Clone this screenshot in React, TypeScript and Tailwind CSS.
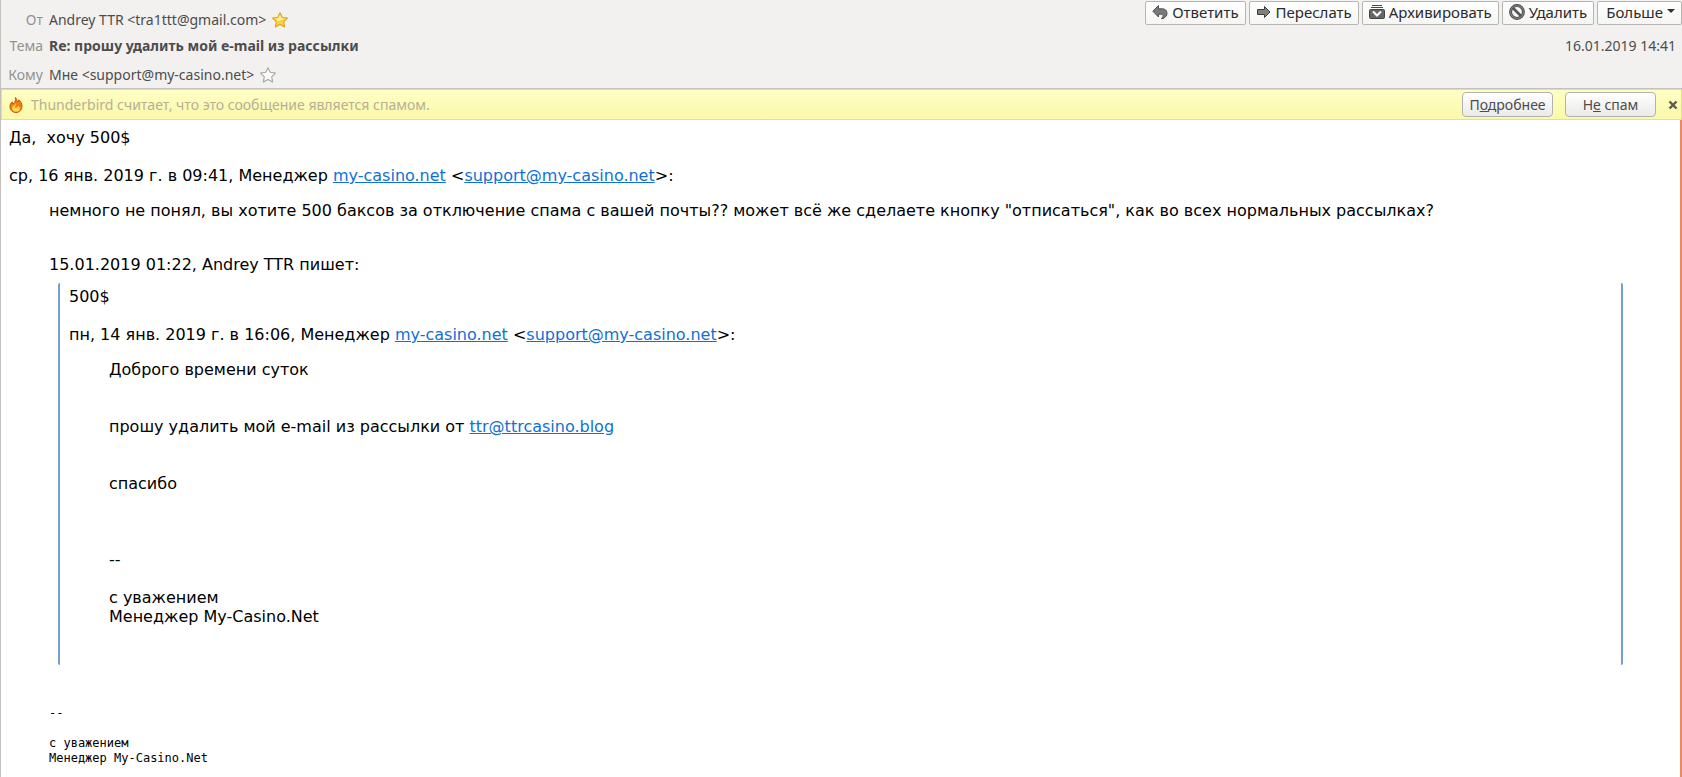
import { type ReactNode } from "react";

const MAIL = "support@my-casino.net";

function ReplyIcon() {
  return (
    <svg width="16" height="16" viewBox="0 0 16 16" aria-hidden="true">
      <path d="M6.500 1.500v3.300h3.500c3.300 0 5 1.700 5 4.600 0 2.100-1.400 3.800-3.600 5.100H9.500c1.100-1.100 1.600-2 1.600-2.900 0-1-.7-1.400-1.900-1.400H6.500v2.800L.8 7.200z" fill="#7a7a7a" stroke="#505050" strokeLinejoin="round" />
    </svg>
  );
}

function ForwardIcon() {
  return (
    <svg width="16" height="16" viewBox="0 0 16 16" aria-hidden="true">
      <path d="M1.500 5.500h7v-3L14 8l-5.500 5.500v-3h-7z" fill="#808080" stroke="#3c3c3c" strokeLinejoin="round" />
    </svg>
  );
}

function ArchiveIcon() {
  return (
    <svg width="16" height="16" viewBox="0 0 16 16" aria-hidden="true">
      <path d="M3 1.500h10M2 3.500h12" stroke="#4c4c4c" />
      <rect x="0.500" y="5.500" width="15" height="9" rx="1" fill="#666" stroke="#444" />
      <path d="M4 7.500l4 4 4-4" fill="none" stroke="#fff" strokeWidth="2" />
    </svg>
  );
}

function DeleteIcon() {
  return (
    <svg width="16" height="16" viewBox="0 0 16 16" aria-hidden="true">
      <circle cx="8" cy="8" r="6.400" fill="none" stroke="#4a4a4a" strokeWidth="3" />
      <circle cx="8" cy="8" r="6.400" fill="none" stroke="#808080" strokeWidth="1.200" />
      <path d="M4 4l8 8" stroke="#555" strokeWidth="2.600" />
    </svg>
  );
}

function Star({ filled }: { filled?: boolean }) {
  return (
    <svg className="ml-1.5" width="16" height="16" viewBox="0.500 0.500 15 15" aria-hidden="true">
      <path
        d="M8 1.200l2.100 4.300 4.900.7-3.500 3.400.8 4.900L8 12.200l-4.300 2.300.8-4.900L1 6.200l4.900-.7z"
        fill={filled ? "#fbd33b" : "#fafafa"}
        stroke={filled ? "#dfa32c" : "#a3a3a3"}
        strokeLinejoin="round"
      />
      {filled && <path d="M8 3l1.400 3.300 3.300.5L5 9.500l.4-2L3 6.800l3.400-.5z" fill="#fff0a0" />}
    </svg>
  );
}

function Flame() {
  return (
    <svg width="16" height="16" viewBox="0 0 16 16" aria-hidden="true">
      <path d="M7.500.5C9 2 8.500 3.500 9.500 5c.8-.5 1.200-1.200 1.300-2.200C13 4.500 14 6.700 14 9c0 3.800-2.500 6.500-6 6.500S2 13 2 9.500c0-2 .8-3.500 2.200-4.700 0 1 .2 1.700.8 2.200C6.800 5.500 8 3.500 7.500.5z" fill="#ee7d16" stroke="#c8540c" />
      <path d="M8 6c.2 1.800-1 2.500-1 3.600 0 .8.500 1.200 1.200 1.200 1 0 1.700-.8 1.800-2 1.400 1 2 2 2 3 0 1.700-1.600 3-4 3s-4-1.500-4-3.600C4 8.800 7.200 8.300 8 6z" fill="#ffd84a" />
    </svg>
  );
}

function ActionButton({ icon, children }: { icon?: ReactNode; children: ReactNode }) {
  return (
    <button type="button" className="flex h-6 items-center gap-1 rounded-xs border border-[#b8b6b3] bg-linear-to-b from-white to-[#f5f5f4] px-1.5 pb-0.5 text-[15px] text-[#2b2b2b]">
      {icon}
      {children}
    </button>
  );
}

function NoticeButton({ children }: { children: ReactNode }) {
  return (
    <button type="button" className="h-[25px] w-[91px] rounded-[4px] border border-[#b4b2ae] bg-linear-to-b from-white to-[#ebeae9] text-[14px] text-[#4c4c4c]">
      {children}
    </button>
  );
}

function Link({ href, children }: { href: string; children: ReactNode }) {
  return <a href={href} className="text-[#1070d8] underline">{children}</a>;
}

function Sender({ date }: { date: string }) {
  return (
    <p>
      {date}, Менеджер <Link href="http://my-casino.net">my-casino.net</Link> &lt;<Link href={`mailto:${MAIL}`}>{MAIL}</Link>&gt;:
    </p>
  );
}

export default function App() {
  return (
    <div className="flex min-h-screen flex-col border-l border-[#c4c0bd] bg-white font-['Noto_Sans',sans-serif]">
      <header className="flex justify-between border-b border-[#c4c2bf] bg-[#f2f1f0] text-[14px] text-[#4c4c4c]">
        <dl className="grid grid-cols-[42px_1fr] gap-x-1.5 pt-1.5 leading-[28px]">
          <dt className="text-right text-[#939290]">От</dt>
          <dd className="flex items-center">Andrey TTR &lt;tra1ttt@gmail.com&gt;<Star filled /></dd>
          <dt className="text-right leading-[24px] text-[#939290]">Тема</dt>
          <dd className="leading-[24px] font-bold">Re: прошу удалить мой e-mail из рассылки</dd>
          <dt className="pt-1 text-right leading-[26px] text-[#939290]">Кому</dt>
          <dd className="flex items-center pt-1 leading-[26px]">Мне &lt;{MAIL}&gt;<Star /></dd>
        </dl>
        <div className="flex flex-col items-end pt-px">
          <div className="flex gap-[3px]">
            <ActionButton icon={<ReplyIcon />}>Ответить</ActionButton>
            <ActionButton icon={<ForwardIcon />}>Переслать</ActionButton>
            <ActionButton icon={<ArchiveIcon />}>Архивировать</ActionButton>
            <ActionButton icon={<DeleteIcon />}>Удалить</ActionButton>
            <ActionButton>
              <span className="pl-0.5">Больше</span>
              <svg width="8" height="8" viewBox="0 0 8 8" aria-hidden="true"><path d="M0 1h8L4 5z" fill="#333" /></svg>
            </ActionButton>
          </div>
          <time className="pt-2.5 pr-1.5 leading-[22px]">16.01.2019 14:41</time>
        </div>
      </header>

      <div className="flex h-[31px] items-center border border-[#e6e27c] bg-linear-to-b from-[#ffffc4] to-[#faf8aa] pr-[3px] pl-1.5">
        <Flame />
        <p className="ml-[7px] flex-1 text-[14px] text-[#b9ae98]">Thunderbird считает, что это сообщение является спамом.</p>
        <div className="flex items-center gap-3">
          <NoticeButton>П<u>о</u>дробнее</NoticeButton>
          <NoticeButton>Н<u>е</u> спам</NoticeButton>
          <button type="button" aria-label="Закрыть">
            <svg width="10" height="10" viewBox="0 0 10 10" aria-hidden="true"><path d="M1.500 1.500l7 7M8.500 1.500l-7 7" stroke="#5a5a50" strokeWidth="2.400" /></svg>
          </button>
        </div>
      </div>

      <main className="flex-1 border-r-2 border-[#f08763] pt-2 pr-2 pl-2 font-['DejaVu_Sans',sans-serif] text-[16px] leading-[19px] text-black">
        <p className="whitespace-pre-wrap">Да,  хочу 500$</p>
        <div className="mt-[19px]"><Sender date="ср, 16 янв. 2019 г. в 09:41" /></div>
        <blockquote className="mx-10 mt-4">
          <p>немного не понял, вы хотите 500 баксов за отключение спама с вашей почты?? может всё же сделаете кнопку "отписаться", как во всех нормальных рассылках?</p>
          <p className="mt-[35px]">15.01.2019 01:22, Andrey TTR пишет:</p>
          <blockquote className="mx-[9px] mt-[9px] rounded-xs border-x-2 border-[#729fcf] px-[9px] pt-1 pb-[39px]">
            <p>500$</p>
            <div className="mt-[19px]"><Sender date="пн, 14 янв. 2019 г. в 16:06" /></div>
            <blockquote className="mx-10 mt-4">
              <p>Доброго времени суток</p>
              <p className="mt-[38px]">прошу удалить мой e-mail из рассылки от <Link href="mailto:ttr@ttrcasino.blog">ttr@ttrcasino.blog</Link></p>
              <p className="mt-[38px]">спасибо</p>
              <p className="mt-[57px]">--</p>
              <p className="mt-[19px]">с уважением<br />Менеджер My-Casino.Net</p>
            </blockquote>
          </blockquote>
          <pre className="mt-[41px] font-['DejaVu_Sans_Mono',monospace] text-[12px] leading-[15px]">{"-- \n\nс уважением\nМенеджер My-Casino.Net"}</pre>
        </blockquote>
      </main>
    </div>
  );
}
